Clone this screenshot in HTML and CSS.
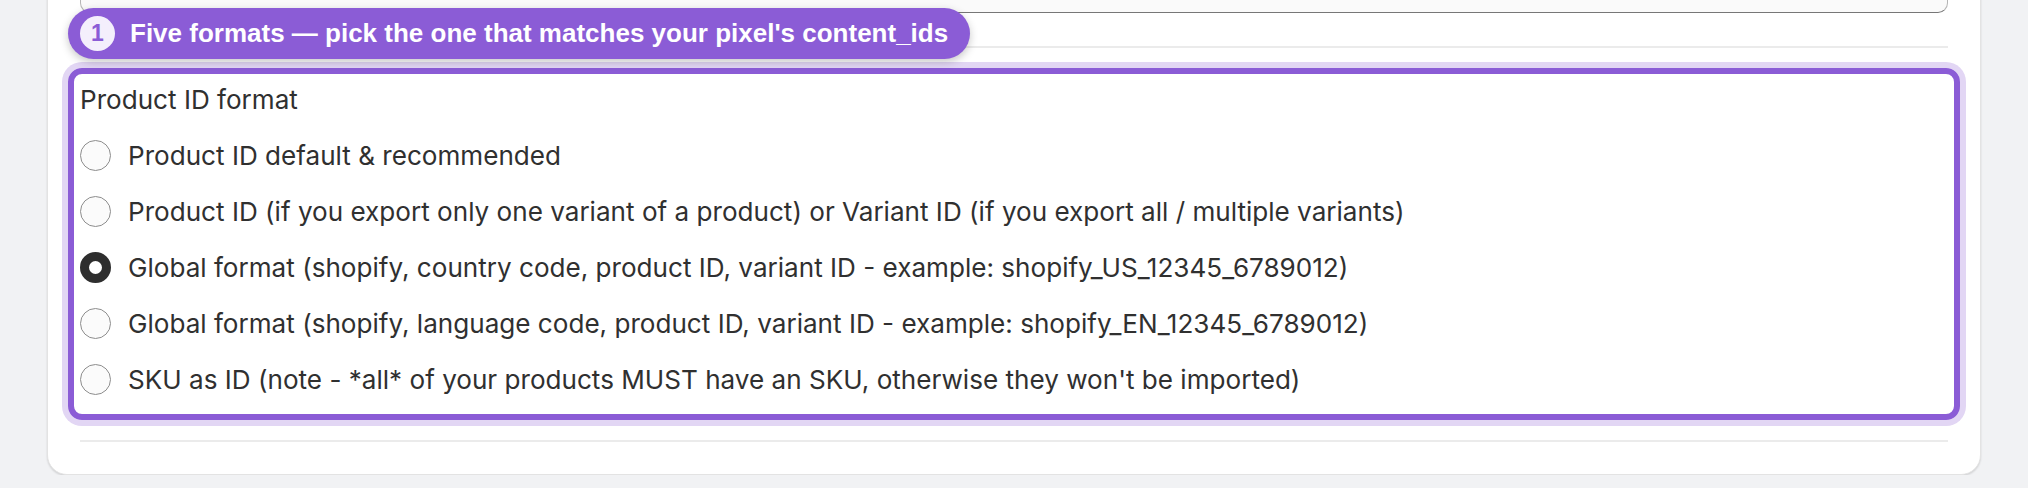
FILE: index.html
```html
<!DOCTYPE html>
<html>
<head>
  <meta charset="UTF-8">
  <link rel="stylesheet" href="styles.css">
</head>
<body>
  <div class="card">
    <div class="text-input"></div>

    <div class="step">
      <div class="step-badge">
        <span class="step-num">1</span>
        Five formats — pick the one that matches your pixel's content_ids
      </div>

      <hr class="divider">

      <fieldset class="choice-group">
        <legend class="choice-title">Product ID format</legend>
        <label class="choice">
          <input type="radio" name="idFormat" value="product">
          Product ID default &amp; recommended
        </label>
        <label class="choice">
          <input type="radio" name="idFormat" value="product_variant">
          Product ID (if you export only one variant of a product) or Variant ID (if you export all / multiple variants)
        </label>
        <label class="choice">
          <input type="radio" name="idFormat" value="global_country" checked>
          Global format (shopify, country code, product ID, variant ID - example: shopify_US_12345_6789012)
        </label>
        <label class="choice">
          <input type="radio" name="idFormat" value="global_language">
          Global format (shopify, language code, product ID, variant ID - example: shopify_EN_12345_6789012)
        </label>
        <label class="choice">
          <input type="radio" name="idFormat" value="sku">
          SKU as ID (note - *all* of your products MUST have an SKU, otherwise they won't be imported)
        </label>
      </fieldset>

      <hr class="divider">
    </div>
  </div>
</body>
</html>
```

FILE: styles.css
```css
:root {
  --accent: #8b5cd6;
  --accent-ring: #e2d6f4;
  --accent-soft: #f4effc;
  --text-primary: #303030;
  --border-color: #e3e3e3;
  --divider: #ebebeb;
  --page-bg: #f1f2f4;
}

body {
  margin: 0;
  padding: 0 47px;
  background: var(--page-bg);
  font-family: 'Inter', 'Noto Sans', sans-serif;
  color: var(--text-primary);
}

.card {
  margin-top: -40px;
  padding: 0 32px 32px;
  background: #fff;
  border: 1px solid var(--border-color);
  border-radius: 20px;
  box-shadow: 0 1px 2px rgba(0, 0, 0, 0.14);
}

.text-input {
  height: 50px;
  background: #fafafa;
  border: 1px solid #b5b5b5;
  border-bottom-color: #777;
  border-radius: 0 0 10px 10px;
}

.step {
  position: relative;
  padding-top: 33px;
}

/* floating callout over the section */
.step-badge {
  position: absolute;
  left: -12px;
  top: -5px;
  height: 51px;
  display: flex;
  align-items: center;
  gap: 15px;
  padding: 0 22px 0 12px;
  background: var(--accent);
  color: #fff;
  border-radius: 26px;
  box-shadow: 0 3px 8px rgba(0, 0, 0, 0.22);
  font-family: 'Liberation Sans', Arial, sans-serif;
  font-weight: 700;
  font-size: 26px;
  white-space: nowrap;
  z-index: 2;
}

.step-num {
  width: 35px;
  height: 35px;
  border-radius: 50%;
  background: var(--accent-soft);
  color: var(--accent);
  display: flex;
  align-items: center;
  justify-content: center;
  font-size: 23px;
}

.divider {
  margin: 0;
  border: none;
  height: 2px;
  background: var(--divider);
}

.choice-group {
  margin: 20px -12px;
  padding: 9px 6px 7px;
  border: 6px solid var(--accent);
  border-radius: 14px;
  box-shadow: 0 0 0 6px var(--accent-ring);
  min-width: 0;
}

.choice-title {
  float: left;
  width: 100%;
  padding: 0;
  line-height: 34px;
  font-size: 26.1px;
  margin-bottom: 10px;
}

.choice {
  clear: both;
  display: flex;
  align-items: center;
  gap: 17px;
  height: 56px;
  font-size: 26.1px;
  cursor: pointer;
}

.choice input[type="radio"] {
  -webkit-appearance: none;
  appearance: none;
  margin: 0;
  width: 31px;
  height: 31px;
  flex: none;
  border: 1px solid #8d8d8d;
  border-radius: 50%;
  background: #fbfbfb;
  cursor: pointer;
}

.choice input[type="radio"]:checked {
  border: 9px solid #2e2e2e;
  background: #fff;
}
```
